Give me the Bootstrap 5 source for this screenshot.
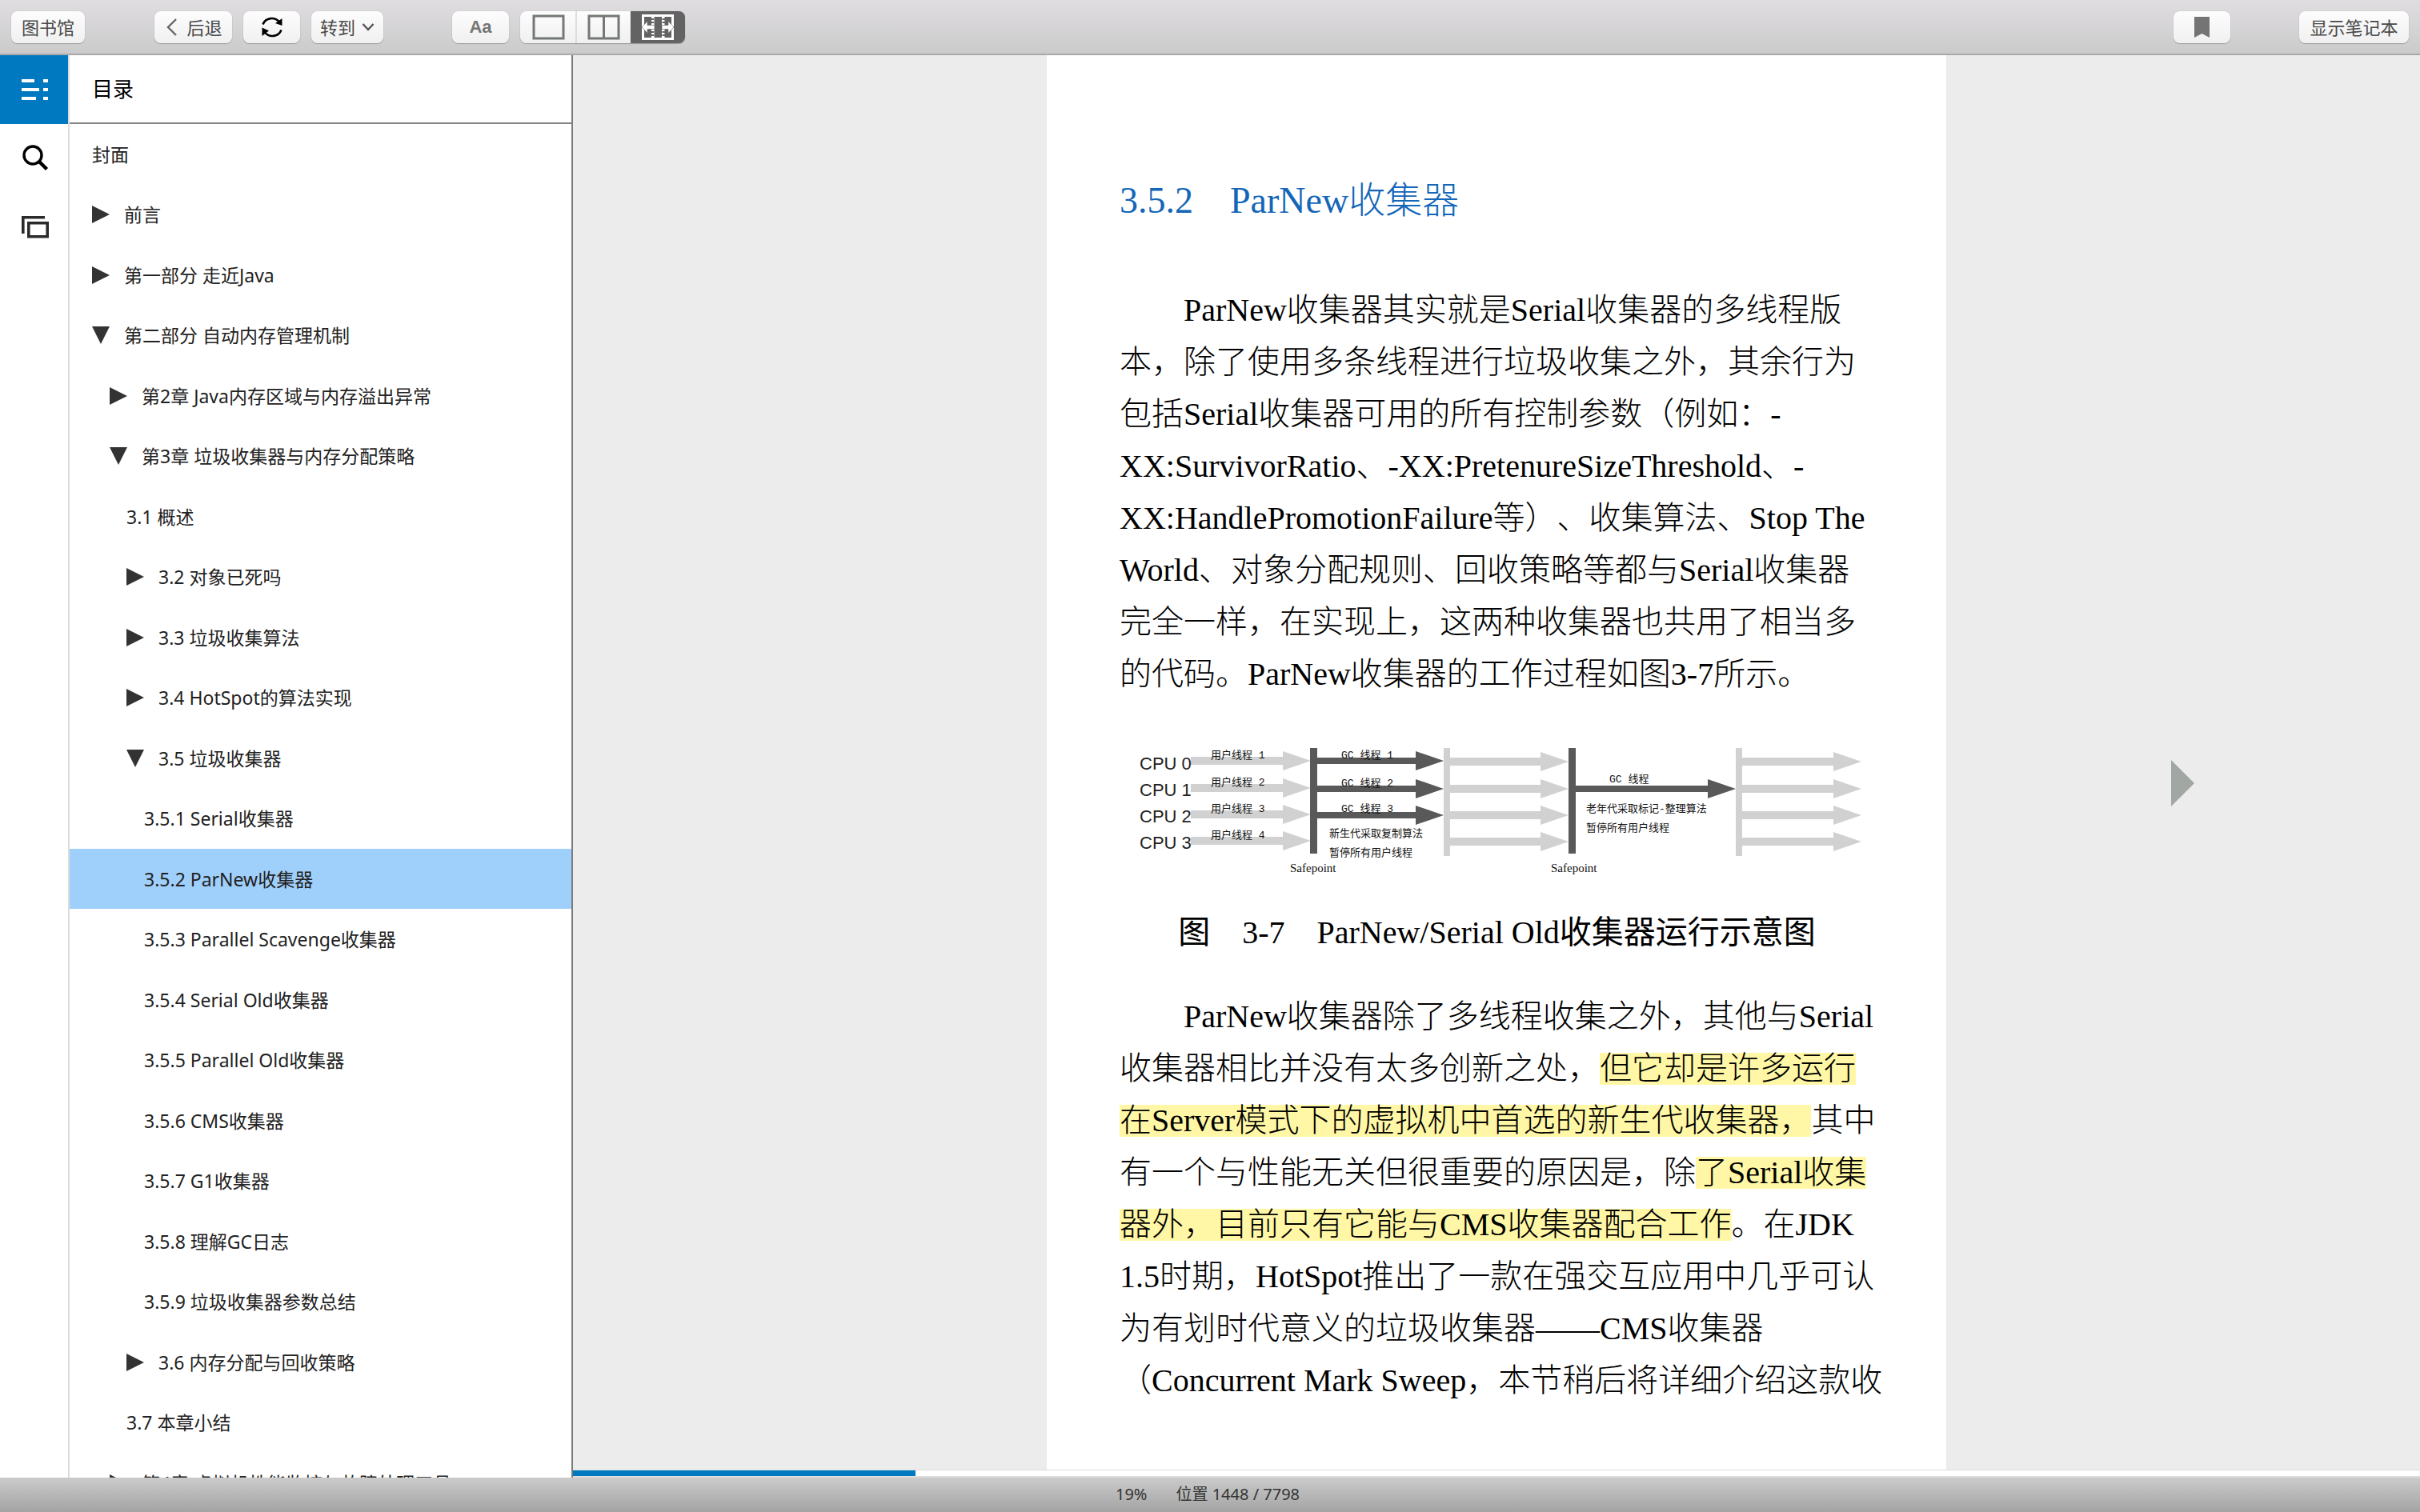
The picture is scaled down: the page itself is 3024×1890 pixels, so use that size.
<!DOCTYPE html>
<html lang="zh-CN">
<head>
<meta charset="utf-8">
<meta name="viewport" content="width=device-width, initial-scale=1">
<title>ParNew收集器</title>
<link rel="stylesheet" href="https://cdn.jsdelivr.net/npm/bootstrap@5.3.0/dist/css/bootstrap.min.css">
<style>
  body { font-family: "Noto Sans", "Noto Sans CJK SC", sans-serif; color: #222; background: #ececec; }
  .topbar { height: 69px; padding: 0 14px; background: linear-gradient(#e0dde1, #cbcbcb); border-bottom: 2px solid #aaa8ab; }
  .tool { height: 40px; padding: 0; border: 0; border-radius: 8px; font-size: 22px; line-height: 40px; color: #4a4a4a;
    background: linear-gradient(#fdfdfd, #f0f0f0); box-shadow: 0 1px 1px #9c9c9c, 0 0 1px #aaa; display: flex; align-items: center; justify-content: center; }
  .tool:hover { background: #f6f6f6; color: #333; }
  .w-lib { width: 92px; } .w-back { width: 97px; } .w-icon { width: 71px; } .w-goto { width: 90px; } .w-notes { width: 137px; }
  .g-lib { margin-right: 87px; } .g-goto { margin-right: 86px; } .g-mark { margin-right: 86px; } .g-aa { margin-right: 14px; }
  .tool-aa { font-family: "Liberation Sans", sans-serif; font-size: 22px; font-weight: 700; color: #757575; }
  .views .tool { width: 68px; border-radius: 0; }
  .views .tool:first-child { width: 70px; border-radius: 8px 0 0 8px; }
  .views .tool + .tool { border-left: 1px solid #ddd; }
  .views .tool:last-child { border-radius: 0 8px 8px 0; background: #636363; border-left: 0; }

  .rail { width: 87px; border-right: 2px solid #dcdcdc; background: #fff; }
  .rail button { height: 86px; padding: 0 0 0 2px; border: 0; background: none; width: 85px; }
  .rail button.current { background: #0079c1; }
  .toc { width: 629px; background: #fff; border-right: 2px solid #7b7b7b; }
  .toc-title { height: 86px; padding-left: 28px; margin: 0; font-size: 26px; line-height: 84px; font-weight: 400; color: #000; border-bottom: 2px solid #868686; }
  .tree a { display: flex; align-items: center; height: 75px; font-size: 23px; line-height: 32px; color: #222; text-decoration: none; white-space: nowrap; }
  .tree li:nth-child(even) a { height: 76px; }
  .tree a.current { background: #9fcffb; }
  .tree svg { width: 22px; height: 22px; margin-right: 18px; fill: #333; flex: none; }
  .lv0 { padding-left: 28px; } .lv1 { padding-left: 50px; } .lv2 { padding-left: 71px; } .lv3 { padding-left: 93px; }

  .side { flex: 1 1 0; min-width: 0; }
  .sheet { flex: 0 1 1124px; background: #fff; padding: 150px 80px 0 91px; white-space: nowrap; overflow: hidden;
    font-family: "Liberation Serif", "Noto Sans CJK SC", serif; font-weight: 300; color: #000; text-spacing-trim: space-all; }
  .sheet h1 { font-size: 46px; line-height: 64px; font-weight: 300; color: #1466b8; margin: 0 0 72px; }
  .sheet p { font-size: 40px; line-height: 65px; margin: 0; text-indent: 80px; }
  .sheet figure { margin: 25px 0 40px; }
  .sheet figure svg { display: block; width: 943px; height: 220px; }
  .sheet figcaption { margin-top: 13px; width: 943px; font-size: 40px; line-height: 65px; text-align: center; font-weight: 400; }
  .hl { background: linear-gradient(#fff7a5, #fff7a5) center / 100% 40px no-repeat; -webkit-box-decoration-break: clone; box-decoration-break: clone; }
  .turn { padding-top: 52px; }
  .turn button { border: 0; background: none; padding: 0; }
  .track { height: 10px; background: #fff; border-top: 1px solid #ddd; border-bottom: 2px solid #ddd; border-radius: 0; }
  .track .progress-bar { background: #0079c1; }
  .statusbar { height: 43px; background: linear-gradient(#cbcbcb, #a3a3a3); font-size: 20px; line-height: 42px; color: #333; gap: 36px; padding-right: 6px; }
</style>
</head>
<body class="vh-100 d-flex flex-column overflow-hidden">
<header class="topbar d-flex align-items-center flex-shrink-0">
  <button class="tool w-lib g-lib" type="button">图书馆</button>
  <div class="d-flex g-goto" style="gap:14px">
    <button class="tool w-back" type="button"><svg class="me-2" width="20" height="24" viewBox="0 0 20 24" fill="none" stroke="#666" stroke-width="2.4"><path d="M15 2 5 12 15 22"/></svg>后退</button>
    <button class="tool w-icon" type="button" aria-label="同步"><svg width="28" height="28" viewBox="0 0 28 28"><g fill="none" stroke="#000" stroke-width="2.6"><path d="M2.500 10.500A12 12 0 0 1 23 7.500"/><path d="M25.500 17.500A12 12 0 0 1 5 20.500"/></g><path d="M26.500 3V12L18 9zM1.500 25V14.500L10 18.500z"/></svg></button>
    <button class="tool w-goto" type="button">转到<svg class="ms-2" width="16" height="12" viewBox="0 0 16 12" fill="none" stroke="#555" stroke-width="2.4"><path d="M1.500 2 8 9 14.500 2"/></svg></button>
  </div>
  <button class="tool tool-aa w-icon g-aa" type="button" aria-label="字体">Aa</button>
  <div class="views d-flex" role="group" aria-label="视图">
    <button class="tool" type="button" aria-label="单页"><svg width="41" height="32" viewBox="0 0 41 32" fill="none" stroke="#747874" stroke-width="3"><path d="M2 2H39V30H2z"/></svg></button>
    <button class="tool" type="button" aria-label="双页"><svg width="41" height="32" viewBox="0 0 41 32" fill="none" stroke="#747874" stroke-width="3"><path d="M2 2H39V30H2zM20.500 2V30" /></svg></button>
    <button class="tool" type="button" aria-label="适合宽度"><svg width="40" height="32" viewBox="0 0 40 32"><path fill="#fff" d="M0 0H40V32H0z"/><path fill="#636363" d="M3 3H12V29H3zM15.500 3H25V29H15.500zM28.500 3H37V29H28.500zM12 5h3v2h-3zM12 9h3v2h-3zM12 21h3v2h-3zM12 25h3v2h-3zM25.500 5h3v2h-3zM25.500 9h3v2h-3zM25.500 21h3v2h-3zM25.500 25h3v2h-3z"/><path fill="#fff" stroke="#636363" stroke-width=".6" d="M0 16 7 8.500V13.500H16V18.500H7V23.500zM40 16 33 8.500V13.500H25V18.500H33V23.500z"/></svg></button>
  </div>
  <button class="tool w-icon g-mark ms-auto" type="button" aria-label="书签"><svg width="19" height="26" viewBox="0 0 19 26" fill="#747474"><path d="M0 0H19V26L9.500 21 0 26z"/></svg></button>
  <button class="tool w-notes" type="button">显示笔记本</button>
</header>

<div class="d-flex flex-grow-1 overflow-hidden">
  <nav class="rail d-flex flex-column flex-shrink-0">
    <button class="current" type="button" aria-label="目录"><svg width="34" height="26" viewBox="0 0 34 26" fill="#fff"><path d="M0 0H16V4H0zM27 0H33V4H27zM0 11H22V15H0zM27 11H33V15H27zM0 22H18V26H0zM27 22H33V26H27z"/></svg></button>
    <button type="button" aria-label="搜索"><svg width="34" height="34" viewBox="0 0 34 34" fill="none" stroke="#000"><circle cx="14" cy="13" r="11" stroke-width="3.400"/><path d="M22 21 31.500 30.500" stroke-width="4.400"/></svg></button>
    <button type="button" aria-label="卡片"><svg width="34" height="28" viewBox="0 0 34 28" fill="none" stroke="#2b2b2b" stroke-width="3.600"><path d="M1.800 22V1.800H29M8.800 8.800H32.200V25.700H8.800z"/></svg></button>
  </nav>

  <aside class="toc d-flex flex-column flex-shrink-0">
    <h2 class="toc-title flex-shrink-0">目录</h2>
    <ul class="tree list-unstyled m-0 flex-grow-1 overflow-hidden">
      <li><a class="lv0" href="#">封面</a></li>
      <li><a class="lv0" href="#"><svg viewBox="0 0 22 22"><path d="M0 0 22 11 0 22z"/></svg>前言</a></li>
      <li><a class="lv0" href="#"><svg viewBox="0 0 22 22"><path d="M0 0 22 11 0 22z"/></svg>第一部分 走近Java</a></li>
      <li><a class="lv0" href="#"><svg viewBox="0 0 22 22"><path d="M0 0H22L11 22z"/></svg>第二部分 自动内存管理机制</a></li>
      <li><a class="lv1" href="#"><svg viewBox="0 0 22 22"><path d="M0 0 22 11 0 22z"/></svg>第2章 Java内存区域与内存溢出异常</a></li>
      <li><a class="lv1" href="#"><svg viewBox="0 0 22 22"><path d="M0 0H22L11 22z"/></svg>第3章 垃圾收集器与内存分配策略</a></li>
      <li><a class="lv2" href="#">3.1 概述</a></li>
      <li><a class="lv2" href="#"><svg viewBox="0 0 22 22"><path d="M0 0 22 11 0 22z"/></svg>3.2 对象已死吗</a></li>
      <li><a class="lv2" href="#"><svg viewBox="0 0 22 22"><path d="M0 0 22 11 0 22z"/></svg>3.3 垃圾收集算法</a></li>
      <li><a class="lv2" href="#"><svg viewBox="0 0 22 22"><path d="M0 0 22 11 0 22z"/></svg>3.4 HotSpot的算法实现</a></li>
      <li><a class="lv2" href="#"><svg viewBox="0 0 22 22"><path d="M0 0H22L11 22z"/></svg>3.5 垃圾收集器</a></li>
      <li><a class="lv3" href="#">3.5.1 Serial收集器</a></li>
      <li><a class="lv3 current" href="#" aria-current="true">3.5.2 ParNew收集器</a></li>
      <li><a class="lv3" href="#">3.5.3 Parallel Scavenge收集器</a></li>
      <li><a class="lv3" href="#">3.5.4 Serial Old收集器</a></li>
      <li><a class="lv3" href="#">3.5.5 Parallel Old收集器</a></li>
      <li><a class="lv3" href="#">3.5.6 CMS收集器</a></li>
      <li><a class="lv3" href="#">3.5.7 G1收集器</a></li>
      <li><a class="lv3" href="#">3.5.8 理解GC日志</a></li>
      <li><a class="lv3" href="#">3.5.9 垃圾收集器参数总结</a></li>
      <li><a class="lv2" href="#"><svg viewBox="0 0 22 22"><path d="M0 0 22 11 0 22z"/></svg>3.6 内存分配与回收策略</a></li>
      <li><a class="lv2" href="#">3.7 本章小结</a></li>
      <li><a class="lv1" href="#"><svg viewBox="0 0 22 22"><path d="M0 0 22 11 0 22z"/></svg>第4章 虚拟机性能监控与故障处理工具</a></li>
    </ul>
  </aside>

  <main class="d-flex flex-column flex-grow-1 overflow-hidden">
    <div class="d-flex flex-grow-1 overflow-hidden">
      <div class="side"></div>
      <article class="sheet">
        <h1>3.5.2　ParNew收集器</h1>
        <p>ParNew收集器其实就是Serial收集器的多线程版<br>本，除了使用多条线程进行垃圾收集之外，其余行为<br>包括Serial收集器可用的所有控制参数（例如：-<br>XX:SurvivorRatio、-XX:PretenureSizeThreshold、-<br>XX:HandlePromotionFailure等）、收集算法、Stop The<br>World、对象分配规则、回收策略等都与Serial收集器<br>完全一样，在实现上，这两种收集器也共用了相当多<br>的代码。ParNew收集器的工作过程如图3-7所示。</p>
        <figure>
          <svg viewBox="9 0 943 220" role="img" aria-label="ParNew/Serial Old收集器运行示意图">
            <defs>
              <path id="user" d="M0 -5H115V-12L150 0 115 12V5H0z"/>
              <path id="gc" d="M0 -4H123V-12L158 0 123 12V4H0z"/>
            </defs>
            <g fill="#d1d1d1">
              <use href="#user" x="98" y="51"/><use href="#user" x="98" y="85"/><use href="#user" x="98" y="118"/><use href="#user" x="98" y="151"/>
              <use href="#user" x="420" y="52"/><use href="#user" x="420" y="86"/><use href="#user" x="420" y="119"/><use href="#user" x="420" y="152"/>
              <use href="#user" x="786" y="52"/><use href="#user" x="786" y="86"/><use href="#user" x="786" y="119"/><use href="#user" x="786" y="152"/>
              <path d="M414 35h8v135h-8zM779 35h8v135h-8z"/>
            </g>
            <g fill="#595959">
              <use href="#gc" x="256" y="51"/><use href="#gc" x="256" y="86"/><use href="#gc" x="256" y="119"/>
              <path d="M247 35h9v132h-9zM570 35h9v132h-9zM579 82H744V74L779 86 744 98V90H579z"/>
            </g>
            <g font-family="Liberation Sans, sans-serif" font-size="22" fill="#222">
              <text x="34" y="62">CPU 0</text><text x="34" y="95">CPU 1</text><text x="34" y="128">CPU 2</text><text x="34" y="161">CPU 3</text>
            </g>
            <g font-family="Liberation Mono, Noto Sans CJK SC, monospace" font-size="13" font-weight="400" fill="#111">
              <text x="123" y="48">用户线程 1</text><text x="123" y="82">用户线程 2</text><text x="123" y="115">用户线程 3</text><text x="123" y="148">用户线程 4</text>
              <text x="286" y="48">GC 线程 1</text><text x="286" y="83">GC 线程 2</text><text x="286" y="115">GC 线程 3</text>
              <text x="271" y="146">新生代采取复制算法</text><text x="271" y="170">暂停所有用户线程</text>
              <text x="621" y="78">GC 线程</text><text x="592" y="115">老年代采取标记-整理算法</text><text x="592" y="139">暂停所有用户线程</text>
            </g>
            <g font-family="Liberation Serif, serif" font-size="15" font-weight="400" fill="#111">
              <text x="222" y="190">Safepoint</text><text x="548" y="190">Safepoint</text>
            </g>
          </svg>
          <figcaption>图　3-7　ParNew/Serial Old收集器运行示意图</figcaption>
        </figure>
        <p>ParNew收集器除了多线程收集之外，其他与Serial<br>收集器相比并没有太多创新之处，<span class="hl">但它却是许多运行<br>在Server模式下的虚拟机中首选的新生代收集器，</span>其中<br>有一个与性能无关但很重要的原因是，除<span class="hl">了Serial收集<br>器外，目前只有它能与CMS收集器配合工作</span>。在JDK<br>1.5时期，HotSpot推出了一款在强交互应用中几乎可认<br>为有划时代意义的垃圾收集器——CMS收集器<br>（Concurrent Mark Sweep，本节稍后将详细介绍这款收</p>
      </article>
      <div class="side turn d-flex align-items-center justify-content-center">
        <button type="button" aria-label="下一页"><svg class="d-block" width="30" height="58" viewBox="0 0 30 58" fill="#a1a7a2"><path d="M0 0 29 29 0 58z"/></svg></button>
      </div>
    </div>
    <div class="progress track flex-shrink-0" role="progressbar" aria-label="阅读进度" aria-valuenow="19" aria-valuemin="0" aria-valuemax="100"><div class="progress-bar" style="width:18.55%"></div></div>
  </main>
</div>

<footer class="statusbar d-flex justify-content-center flex-shrink-0"><span>19%</span><span>位置 1448 / 7798</span></footer>
<script src="https://cdn.jsdelivr.net/npm/bootstrap@5.3.0/dist/js/bootstrap.bundle.min.js"></script>
</body>
</html>
